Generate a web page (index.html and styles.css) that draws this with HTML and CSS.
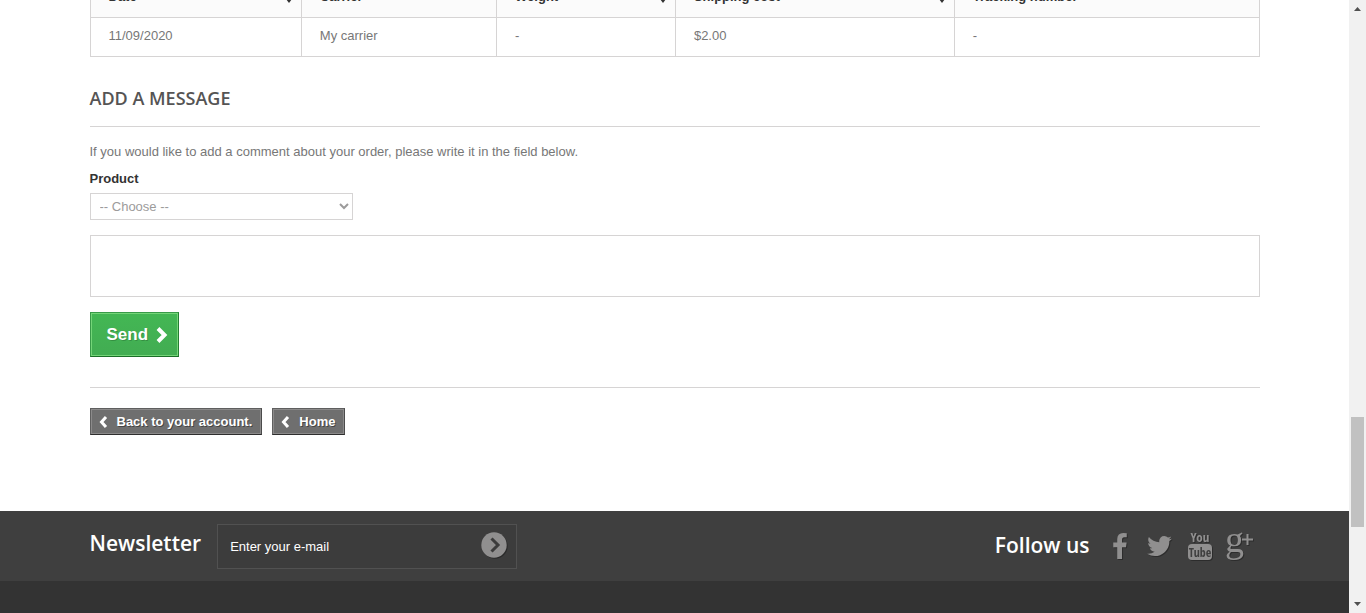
FILE: index.html
```html
<!DOCTYPE html>
<html lang="en">
<head>
<meta charset="utf-8">
<title>Order details</title>
<link rel="stylesheet" href="styles.css">
</head>
<body>
<div class="page">
  <main class="content container">
    <table class="shipping">
      <colgroup><col class="c-date"><col class="c-carrier"><col class="c-weight"><col class="c-cost"><col class="c-track"></colgroup>
      <thead>
        <tr>
          <th><span class="head">Date <svg class="sort" viewBox="0 0 8 14"><path d="M1 5l3-4 3 4zM1 9h6l-3 4z"/></svg></span></th>
          <th><span class="head">Carrier</span></th>
          <th><span class="head">Weight <svg class="sort" viewBox="0 0 8 14"><path d="M1 5l3-4 3 4zM1 9h6l-3 4z"/></svg></span></th>
          <th><span class="head">Shipping cost <svg class="sort" viewBox="0 0 8 14"><path d="M1 5l3-4 3 4zM1 9h6l-3 4z"/></svg></span></th>
          <th><span class="head">Tracking number</span></th>
        </tr>
      </thead>
      <tbody>
        <tr><td>11/09/2020</td><td>My carrier</td><td>-</td><td>$2.00</td><td>-</td></tr>
      </tbody>
    </table>

    <form class="message">
      <h3 class="heading">Add a message</h3>
      <p class="intro">If you would like to add a comment about your order, please write it in the field below.</p>
      <label class="label" for="product">Product</label>
      <select class="select" id="product"><option>-- Choose --</option></select>
      <textarea class="textarea" aria-label="Message"></textarea>
      <button class="send" type="submit">Send
        <svg class="send-icon" viewBox="0 0 12 16"><path d="M2 1.500L8.500 8 2 14.500"/></svg>
      </button>
    </form>

    <nav class="links">
      <a class="small-btn" href="#"><svg class="back-icon" viewBox="0 0 9 12"><path d="M7 1L2.500 6 7 11"/></svg>Back to your account.</a>
      <a class="small-btn" href="#"><svg class="back-icon" viewBox="0 0 9 12"><path d="M7 1L2.500 6 7 11"/></svg>Home</a>
    </nav>
  </main>

  <footer class="footer">
    <div class="footer-top">
      <div class="container footer-row">
        <h4 class="footer-title">Newsletter</h4>
        <form class="newsletter">
          <input class="email" type="text" value="Enter your e-mail" aria-label="E-mail">
          <button class="go" type="button" aria-label="Subscribe">
            <svg viewBox="0 0 26 26"><circle cx="13" cy="13" r="12.700"/><path d="M10.500 6.500L17 13l-6.500 6.500"/></svg>
          </button>
        </form>
        <h4 class="footer-title follow">Follow us</h4>
        <ul class="social">
          <li><a href="#" aria-label="Facebook"><svg width="14" height="26" viewBox="479 0 864 1664"><path d="M1343 12v264h-157q-86 0-116 36t-30 108v189h293l-39 296h-254v759h-306v-759h-255v-296h255v-218q0-186 104-288.500t277-102.500q147 0 228 12z"/></svg></a></li>
          <li><a href="#" aria-label="Twitter"><svg width="25" height="20" viewBox="108 256 1576 1280"><path d="M1684 408q-67 98-162 167 1 14 1 42 0 130-38 259.500t-115.500 248.500-184.500 210.500-258 146-323 54.500q-271 0-496-145 35 4 78 4 225 0 401-138-105-2-188-64.500t-114-159.500q33 5 61 5 43 0 85-11-112-23-185.500-111.500t-73.500-205.500v-4q68 38 146 41-66-44-105-115t-39-154q0-88 44-163 121 149 294.500 238.500t371.500 99.500q-8-38-8-74 0-134 94.500-228.500t228.500-94.500q140 0 236 102 109-21 205-78-37 115-142 178 93-10 186-50z"/></svg></a></li>
          <li><a href="#" aria-label="YouTube"><svg width="24" height="28" viewBox="0 0 24 28"><text class="tube-you" x="12" y="10">You</text><rect x="0" y="12" width="24" height="16" rx="4"/><text class="tube-box" x="12" y="25">Tube</text></svg></a></li>
          <li><a href="#" aria-label="Google Plus"><svg width="28" height="28" viewBox="0 0 28 28"><text class="gplus-g" x="-1" y="20">g</text><path d="M20.500 2h2v4.500H27v2h-4.500V13h-2V8.500H16v-2h4.500z"/></svg></a></li>
        </ul>
      </div>
    </div>
  </footer>
</div>
<aside class="scrollbar" aria-hidden="true">
  <svg width="7" height="4" viewBox="0 0 7 4"><path d="M0 4l3.500-4L7 4z"/></svg>
  <div class="track"><div class="thumb"></div></div>
  <svg width="7" height="4" viewBox="0 0 7 4"><path d="M0 0h7L3.500 4z"/></svg>
</aside>
</body>
</html>
```
FILE: styles.css
```css
* { box-sizing: border-box; }
body {
  margin: 0;
  height: 100vh;
  display: flex;
  overflow: hidden;
  background: #fff;
  color: #777;
  font: 13px/18px "Liberation Sans", Arial, sans-serif;
}
.page {
  flex: 1;
  min-width: 0;
  display: flex;
  flex-direction: column;
  overflow: hidden;
}
.container { width: 100%; max-width: 1170px; margin: 0 auto; }

/* the page is scrolled part way into the shipping table */
.shipping {
  width: 100%;
  margin-top: -22px;
  border-collapse: collapse;
  table-layout: fixed;
}
.c-date { width: 18.080%; }
.c-carrier { width: 16.700%; }
.c-weight { width: 15.300%; }
.c-cost { width: 23.850%; }
.c-track { width: 26.070%; }
.shipping th, .shipping td {
  border: 1px solid #d6d4d4;
  padding: 9px 8px 11px 18px;
  text-align: left;
}
.shipping th { background: #fbfbfb; color: #333; }
.head { display: flex; justify-content: space-between; align-items: center; }
.sort { width: 8px; height: 14px; fill: #333; }

.heading {
  margin: 30px 0 16px;
  padding-bottom: 17px;
  border-bottom: 1px solid #d6d4d4;
  color: #555454;
  font: 600 18px/22px "Open Sans", sans-serif;
  text-transform: uppercase;
}
.intro { margin: 0 0 9px; }
.label { display: block; margin-bottom: 5px; color: #333; font-weight: bold; }
.select {
  display: block;
  width: 263px;
  height: 27px;
  padding: 3px 5px;
  border: 1px solid #d6d4d4;
  border-radius: 0;
  background: #fff;
  color: #9c9b9b;
  font: inherit;
}
.textarea {
  display: block;
  width: 100%;
  height: 62px;
  margin: 15px 0;
  border: 1px solid #d6d4d4;
  font: inherit;
  resize: none;
}
.send {
  display: flex;
  align-items: center;
  gap: 8px;
  padding: 11px 10px 10px 16px;
  border: 1px solid;
  border-color: #399a49 #247f32 #1a6d27 #399a49;
  box-shadow: inset 0 0 0 1px #74d578;
  background: linear-gradient(#43b754, #42ac52);
  color: #fff;
  font: bold 17px/22px "Liberation Sans", Arial, sans-serif;
  text-shadow: 1px 1px rgba(0, 0, 0, .2);
}
.send-icon { width: 12px; height: 16px; fill: none; stroke: #fff; stroke-width: 4; }

.links {
  display: flex;
  gap: 10px;
  margin-top: 30px;
  padding: 20px 0 76px;
  border-top: 1px solid #d6d4d4;
}
.small-btn {
  display: flex;
  align-items: center;
  gap: 9px;
  padding: 4px 9px 3px 8px;
  height: 27px;
  border: 1px solid;
  border-color: #5f5f5f #4b4b4b #2e2e2e #5f5f5f;
  box-shadow: inset 0 0 0 1px #8b8a8a;
  background: #6f6f6f;
  color: #fff;
  font-weight: bold;
  text-decoration: none;
  text-shadow: 1px 1px rgba(0, 0, 0, .4);
}
.back-icon { width: 9px; height: 12px; fill: none; stroke: #fff; stroke-width: 3; }

.footer { flex: 1; background: #333; }
.footer-top { background: #3f3f3f; }
.footer-row { display: flex; align-items: center; padding: 13px 0 12px; }
.footer-title {
  margin: 0 16px 6px 0;
  color: #fff;
  font: 600 21px/25px "Open Sans", sans-serif;
}
.follow { margin: 0 10px 2px auto; }
.newsletter {
  display: flex;
  align-items: center;
  width: 300px;
  height: 45px;
  border: 1px solid #515151;
  background: #3c3c3c;
}
.email {
  flex: 1;
  min-width: 0;
  padding: 0 12px;
  border: 0;
  background: none;
  color: #fff;
  font: inherit;
}
.go {
  width: 26px;
  height: 26px;
  margin: 0 9px 3px 0;
  padding: 0;
  border: 0;
  background: none;
}
.go svg { display: block; fill: #908f8f; filter: drop-shadow(1px 1px rgba(0, 0, 0, .3)); }
.go path { fill: none; stroke: #3c3c3c; stroke-width: 3; }
.social { display: flex; margin: 0; padding: 0; list-style: none; }
.social a {
  display: flex;
  align-items: center;
  justify-content: center;
  width: 40px;
  height: 45px;
  padding-bottom: 2px;
}
.social svg { fill: #908f8f; filter: drop-shadow(1px 1px rgba(0, 0, 0, .3)); }
.social text { text-anchor: middle; font-family: "Open Sans Condensed", "Roboto Condensed", Roboto, sans-serif; }
.social .tube-you { font-size: 13px; font-weight: 500; }
.social .tube-box { fill: #3f3f3f; font-size: 12px; font-weight: 500; }
.social .gplus-g { text-anchor: start; font: 38px "Liberation Serif", serif; }

.scrollbar {
  display: flex;
  flex-direction: column;
  align-items: center;
  width: 17px;
  padding: 7px 0;
  background: #f1f1f1;
}
.scrollbar svg { fill: #505050; }
.track { flex: 1; width: 13px; display: flex; flex-direction: column; justify-content: flex-end; }
.thumb { height: 18.600%; margin-bottom: 75px; background: #c1c1c1; }
```
